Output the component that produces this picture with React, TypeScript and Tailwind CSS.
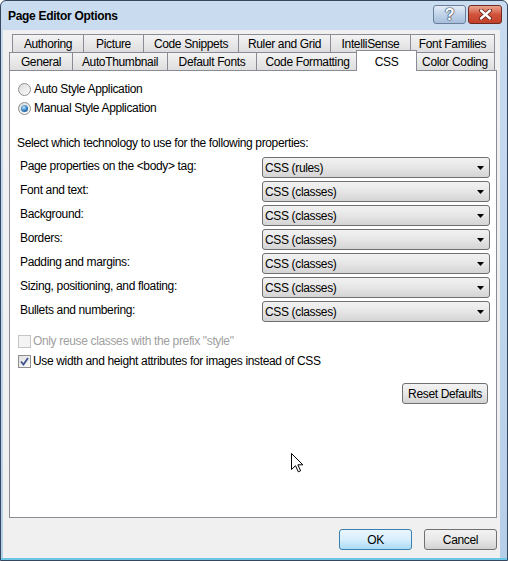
import React from 'react';

const rowOne = [
  { label: 'Authoring', w: 'w-[71px]' },
  { label: 'Picture', w: 'w-[60px]' },
  { label: 'Code Snippets', w: 'w-[95px]' },
  { label: 'Ruler and Grid', w: 'w-[92px]' },
  { label: 'IntelliSense', w: 'w-[80px]' },
  { label: 'Font Families', w: 'w-[85px]' },
];

const rowTwo = [
  { label: 'General', w: 'w-[63px]' },
  { label: 'AutoThumbnail', w: 'w-[95px]' },
  { label: 'Default Fonts', w: 'w-[89px]' },
  { label: 'Code Formatting', w: 'w-[102px]' },
  { label: 'CSS', w: 'w-[57px]', active: true },
  { label: 'Color Coding', w: 'w-[80px]' },
];

const props = [
  { label: 'Page properties on the <body> tag:', value: 'CSS (rules)' },
  { label: 'Font and text:', value: 'CSS (classes)' },
  { label: 'Background:', value: 'CSS (classes)' },
  { label: 'Borders:', value: 'CSS (classes)' },
  { label: 'Padding and margins:', value: 'CSS (classes)' },
  { label: 'Sizing, positioning, and floating:', value: 'CSS (classes)' },
  { label: 'Bullets and numbering:', value: 'CSS (classes)' },
];

const tabBase =
  'h-[18px] flex items-center justify-center border-t border-l border-[#898c95] bg-gradient-to-b from-[#f3f3f3] to-[#dedede] whitespace-nowrap';

const Radio: React.FC<{ checked?: boolean; label: string }> = ({ checked, label }) => (
  <div className="h-[18px] flex items-center gap-[3px]">
    <span className="w-[13px] h-[13px] rounded-full border border-[#8e8f8f] bg-gradient-to-br from-[#dcdcdc] to-[#fbfbfb] flex items-center justify-center">
      {checked && (
        <span className="w-[7px] h-[7px] rounded-full bg-[radial-gradient(circle_at_40%_35%,#bfe6fb,#2d78bb_55%,#15457a)]" />
      )}
    </span>
    <span>{label}</span>
  </div>
);

const Check: React.FC<{ checked?: boolean; disabled?: boolean; label: string }> = ({ checked, disabled, label }) => (
  <div className={`h-[18px] flex items-center gap-[2px] ${disabled ? 'text-[#a0a0a0]' : ''}`}>
    <span
      className={`w-[13px] h-[13px] border flex items-center justify-center ${
        disabled ? 'border-[#c5c5c5] bg-[#f4f4f4]' : 'border-[#8e8f8f] bg-gradient-to-br from-[#e0e0e0] to-[#fafafa]'
      }`}
    >
      {checked && (
        <svg width="9" height="9" viewBox="0 0 9 9">
          <path d="M1 4.5 L3.5 7.5 L8 1" fill="none" stroke="#3f548e" strokeWidth="1.8" />
        </svg>
      )}
    </span>
    <span>{label}</span>
  </div>
);

const Select: React.FC<{ value: string }> = ({ value }) => (
  <div className="w-[228px] h-[21px] rounded-[3px] border border-[#707070] bg-gradient-to-b from-[#f2f2f2] via-[#e6e6e6] to-[#d4d4d4] flex items-center justify-between pl-[2px] pr-[5px]">
    <span>{value}</span>
    <svg width="7" height="4" viewBox="0 0 7 4">
      <path d="M0 0 H7 L3.5 4 Z" fill="#000" />
    </svg>
  </div>
);

const Button: React.FC<{ label: string; w: string; primary?: boolean }> = ({ label, w, primary }) => (
  <div
    className={`${w} h-[21px] rounded-[3px] border flex items-center justify-center ${
      primary
        ? 'border-[#3c7fb1] bg-gradient-to-b from-[#eaf6fd] via-[#d7effc] to-[#a9dbf6]'
        : 'border-[#707070] bg-gradient-to-b from-[#f2f2f2] via-[#e8e8e8] to-[#d2d2d2]'
    }`}
  >
    {label}
  </div>
);

export default function App() {
  return (
    <div className="relative w-[508px] h-[561px] flex flex-col bg-gradient-to-b from-[#c9dcf0] to-[#b6cfe9] border border-[#34475e] rounded-t-[6px] overflow-hidden font-['Liberation_Sans',Arial,sans-serif] text-[12px] tracking-[-0.35px] text-black">
      <div className="h-[29px] flex items-center pl-[7px] pr-[5px] shrink-0">
        <span className="font-bold text-[12px] tracking-[-0.3px] text-[#000]">Page Editor Options</span>
        <div className="ml-auto flex items-start gap-[2px] self-start mt-[4px]">
          <div className="w-[33px] h-[19px] rounded-[3px] border border-[#6b7f9a] bg-gradient-to-b from-[#e4edf7] via-[#c1d3e8] to-[#a7bfdc] flex items-center justify-center">
            <span className="font-bold text-[16px] leading-none text-white [text-shadow:0_0_2px_#2c3e57,0_0_1px_#2c3e57,0_0_1px_#2c3e57]">?</span>
          </div>
          <div className="w-[34px] h-[19px] rounded-[3px] border border-[#6e2a20] bg-gradient-to-b from-[#eaa590] via-[#d0523b] to-[#c4402a] flex items-center justify-center">
            <svg width="13" height="11" viewBox="0 0 13 11">
              <path d="M2 1.5 L11 9.5 M11 1.5 L2 9.5" stroke="#5c1a10" strokeWidth="4" strokeLinecap="round" />
              <path d="M2 1.5 L11 9.5 M11 1.5 L2 9.5" stroke="#fff" strokeWidth="2.4" strokeLinecap="round" />
            </svg>
          </div>
        </div>
      </div>

      <div className="flex-1 flex flex-col ml-[2px] mr-[7px] mb-[2px] bg-[#f0f0f0] pt-[4px] pl-[6px] pr-[3px]">
        <div className="flex pl-[3px]">
          {rowOne.map((t, i) => (
            <div key={t.label} className={`${tabBase} ${t.w} ${i === rowOne.length - 1 ? 'border-r' : ''}`}>
              {t.label}
            </div>
          ))}
        </div>
        <div className="flex">
          {rowTwo.map((t, i) => (
            <div
              key={t.label}
              className={`${tabBase} ${t.w} relative ${i === rowTwo.length - 1 ? 'border-r' : ''} ${t.active ? 'z-10' : ''}`}
            >
              {t.active && (
                <div className="absolute -left-[3px] -right-[2px] -top-[3px] -bottom-[1px] bg-white border-t border-l border-r border-[#898c95] flex justify-center pt-[2px]">
                  {t.label}
                </div>
              )}
              {!t.active && t.label}
            </div>
          ))}
        </div>

        <div className="h-[448px] bg-white border border-[#898c95] flex flex-col pl-[7px] pr-[6px]">
          <div className="mt-[9px] ml-[1px] flex flex-col gap-[1px]">
            <Radio label="Auto Style Application" />
            <Radio checked label="Manual Style Application" />
          </div>

          <div className="mt-[18px] h-[16px] leading-[16px]">
            Select which technology to use for the following properties:
          </div>

          <div className="mt-[6px] flex flex-col gap-[3px]">
            {props.map((p) => (
              <div key={p.label} className="flex items-center justify-between">
                <span className="ml-[3px] -mt-[4px]">{p.label}</span>
                <Select value={p.value} />
              </div>
            ))}
          </div>

          <div className="mt-[10px] ml-[1px] flex flex-col gap-[2px]">
            <Check disabled label={'Only reuse classes with the prefix "style"'} />
            <Check checked label="Use width and height attributes for images instead of CSS" />
          </div>

          <div className="mt-[13px] flex justify-end pr-[2px]">
            <Button label="Reset Defaults" w="w-[86px]" />
          </div>
        </div>

        <div className="mt-[11px] flex justify-end gap-[12px]">
          <Button label="OK" w="w-[73px]" primary />
          <Button label="Cancel" w="w-[73px]" />
        </div>
      </div>
      <div className="absolute left-0 right-0 bottom-0 h-[2px] bg-[#6cc7e6]" />

      <svg className="absolute left-[290px] top-[452px]" width="13" height="20" viewBox="0 0 13 20">
        <path d="M0.5 0.5 L0.5 16.5 L4.5 12.7 L7.3 18.8 L9.6 17.8 L6.9 11.8 L11.8 11.8 Z" fill="#fff" stroke="#000" strokeWidth="1" />
      </svg>
    </div>
  );
}
